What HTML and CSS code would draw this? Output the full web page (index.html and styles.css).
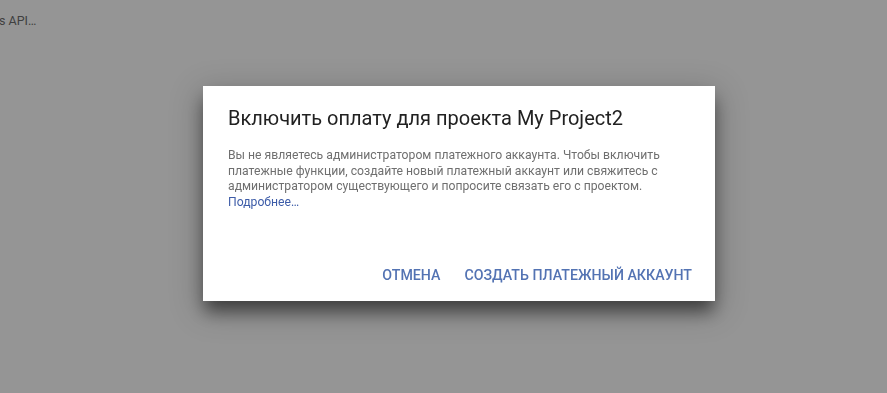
FILE: index.html
```html
<!DOCTYPE html>
<html lang="ru">
<head>
  <meta charset="UTF-8">
  <title>Включить оплату</title>
  <link rel="stylesheet" href="styles.css">
</head>
<body>

  <div class="page">
    <p class="crumb">s API…</p>
  </div>

  <div class="overlay">
    <div class="dialog">
      <h2 class="dialog-title">Включить оплату для проекта My Project2</h2>
      <p class="dialog-text">
        Вы не являетесь администратором платежного аккаунта. Чтобы включить
        платежные функции, создайте новый платежный аккаунт или свяжитесь с
        администратором существующего и попросите связать его с проектом.
        <br><a href="#" class="more">Подробнее…</a>
      </p>
      <div class="actions">
        <button class="btn">Отмена</button>
        <button class="btn">Создать платежный аккаунт</button>
      </div>
    </div>
  </div>

</body>
</html>
```

FILE: styles.css
```css
    body {
      font-family: Roboto, "Noto Sans", Arial, sans-serif;
      background: #959595;
      margin: 0;
      height: 393px;
      overflow: hidden;
    }

    .page {
      padding: 13px 0 0 0;
    }

    .crumb {
      margin: 0 0 0 -1px;
      font-size: 12.5px;
      color: #404040;
    }

    .overlay {
      position: fixed;
      top: 0;
      left: 0;
      right: 0;
      bottom: 0;
    }

    .dialog {
      width: 512px;
      height: 215px;
      margin: 86px 0 0 203px;
      background: white;
      box-sizing: border-box;
      padding: 18px 23px 0 25px;
      box-shadow: 0 12px 16px -2px rgba(0,0,0,0.5), 0 8px 30px 4px rgba(0,0,0,0.2);
    }

    .dialog-title {
      margin: 0;
      font-size: 20px;
      font-weight: 400;
      line-height: 28px;
      color: #212121;
    }

    .dialog-text {
      margin: 16px 0 0 0;
      font-size: 12.2px;
      line-height: 15.5px;
      color: #6f6f6f;
      width: 462px;
    }

    .more {
      color: #3d5ca8;
      text-decoration: none;
    }

    .actions {
      display: flex;
      justify-content: flex-end;
      gap: 24px;
      margin-top: 57px;
    }

    .btn {
      padding: 0;
      background: none;
      border: none;
      font-family: Roboto, Arial, sans-serif;
      font-size: 14.2px;
      font-weight: 500;
      text-transform: uppercase;
      color: #5373b3;
      cursor: pointer;
    }
```
